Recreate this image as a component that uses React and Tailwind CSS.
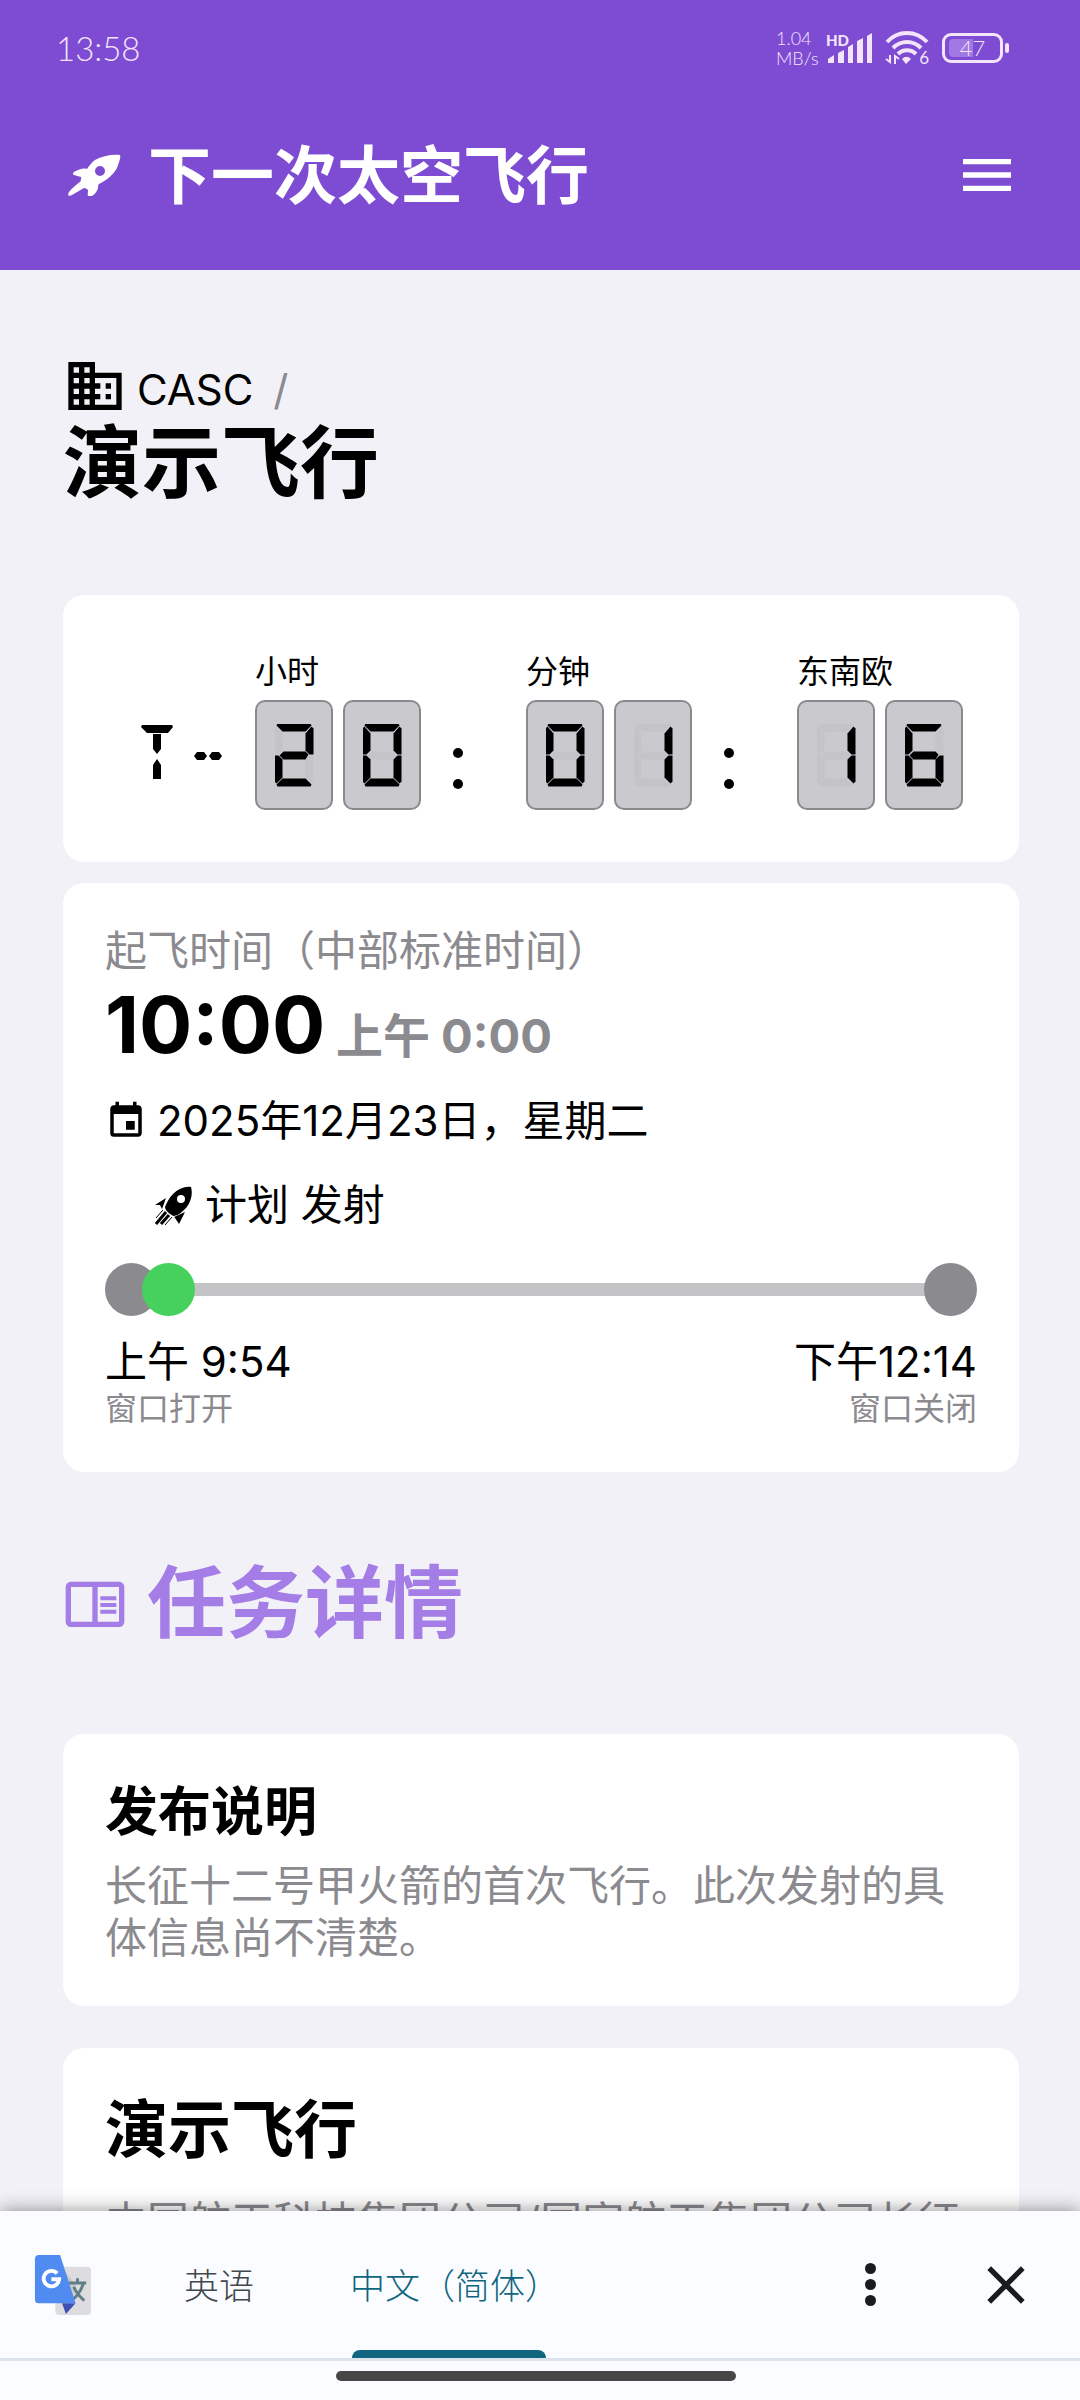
import { MdBusiness, MdEvent, MdOutlineChromeReaderMode, MdMenu, MdClose } from 'react-icons/md'

// Seven-segment shapes, clipped out of a 39x63 cell
const SEGMENTS = {
  a: '[clip-path:polygon(3px_0px,36px_0px,37px_2px,31px_8px,8px_8px,2px_2px)]',
  b: '[clip-path:polygon(37px_3px,39px_5px,39px_31px,35px_31px,31px_27px,31px_10px)]',
  c: '[clip-path:polygon(35px_32px,39px_32px,39px_58px,37px_60px,31px_54px,31px_36px)]',
  d: '[clip-path:polygon(8px_55px,31px_55px,37px_61px,36px_63px,3px_63px,2px_61px)]',
  e: '[clip-path:polygon(0px_32px,4px_32px,8px_36px,8px_54px,2px_60px,0px_58px)]',
  f: '[clip-path:polygon(2px_3px,8px_10px,8px_27px,4px_31px,0px_31px,0px_5px)]',
  g: '[clip-path:polygon(9px_28px,31px_28px,34px_31px,31px_36px,9px_36px,5px_32px)]',
}

const LIT = {
  0: 'abcdef',
  1: 'bc',
  2: 'abged',
  3: 'abgcd',
  4: 'fgbc',
  5: 'afgcd',
  6: 'afgecd',
  7: 'abc',
  8: 'abcdefg',
  9: 'abcdfg',
}

const UNITS = [
  { label: '小时', value: '20' },
  { label: '分钟', value: '01' },
  { label: '东南欧', value: '16' },
]

function Digit({ value }) {
  return (
    <div className="grid h-[110px] w-[78px] place-items-center rounded-[10px] border-2 border-[#8a898e] bg-[#cac9ce]">
      <div className="grid h-[63px] w-[39px]">
        {Object.entries(SEGMENTS).map(([name, shape]) => (
          <span
            key={name}
            className={`[grid-area:1/1] ${shape} ${LIT[value].includes(name) ? 'bg-black' : 'bg-[#c4c4c6]'}`}
          />
        ))}
      </div>
    </div>
  )
}

function Colon() {
  return (
    <div className="flex h-[110px] w-[105px] flex-col items-center gap-[21px] pt-12 pr-8">
      <span className="h-[10px] w-[10px] rounded-full bg-black" />
      <span className="h-[10px] w-[10px] rounded-full bg-black" />
    </div>
  )
}

function TMinus() {
  return (
    <div className="flex h-[110px] w-[136px] pt-[25px] pl-[22px]" role="img" aria-label="T-">
      <div className="grid h-[54px] w-8">
        <span className="[grid-area:1/1] bg-black [clip-path:polygon(1px_0px,31px_0px,32px_2px,27px_8px,6px_8px,0px_2px)]" />
        <span className="[grid-area:1/1] bg-black [clip-path:polygon(12px_9px,20px_9px,20px_24px,16px_29px,12px_24px)]" />
        <span className="[grid-area:1/1] bg-black [clip-path:polygon(16px_34px,20px_40px,20px_54px,12px_54px,12px_40px)]" />
      </div>
      <div className="flex gap-[2px] pt-[27px] pl-[21px]">
        <span className="h-2 w-[13px] bg-black [clip-path:polygon(3px_0px,10px_0px,13px_4px,10px_8px,3px_8px,0px_4px)]" />
        <span className="h-2 w-[13px] bg-black [clip-path:polygon(3px_0px,10px_0px,13px_4px,10px_8px,3px_8px,0px_4px)]" />
      </div>
    </div>
  )
}

function Countdown() {
  return (
    <section className="flex items-end justify-center rounded-[21px] bg-white pt-[57px] pb-[52px]">
      <TMinus />
      {UNITS.map((unit, i) => (
        <div key={unit.label} className="flex items-end">
          {i > 0 && <Colon />}
          <div>
            <p className="mb-2 text-[32px] leading-10 text-black">{unit.label}</p>
            <div className="flex gap-[10px]" role="img" aria-label={unit.value}>
              {unit.value.split('').map((d, j) => (
                <Digit key={j} value={d} />
              ))}
            </div>
          </div>
        </div>
      ))}
    </section>
  )
}

function HeaderRocket() {
  return (
    <svg viewBox="0 0 53 42" className="h-[42px] w-[53px]" aria-hidden="true">
      <path
        fill="#fff"
        fillRule="evenodd"
        d="M52 1C44 0 34 2 27 6c-3 2-6 6-8 9-4-1-7 0-11 2-3 1-4 3-2 4l7 2c1 1-1 3 0 4-4 3-9 7-12 11-2 3 0 5 3 3 4-2 8-5 12-7 2 0 3 1 4 2 0 3-1 7 1 7 5-1 8-5 9-9 0-2 0-3 1-4 8-4 14-9 18-16C51 8 53 4 52 1ZM32 12a5 5 0 1 0 0 10a5 5 0 0 0 0-10Z"
      />
    </svg>
  )
}

function LaunchRocket() {
  return (
    <svg viewBox="0 0 42 42" className="h-[42px] w-[42px]" aria-hidden="true">
      <path
        fillRule="evenodd"
        d="M38 3c-6-1-13 2-18 7-4 4-6 8-8 13 0 3 5 8 9 9 5-1 8-4 12-8 5-6 7-14 5-21ZM28 11a4 4 0 1 1 0 8a4 4 0 0 1 0-8Z"
      />
      <path d="M2 21l11-7-4 11-2-4ZM32 28l-6 12-4-6-1-1Z" />
      <path stroke="#000" strokeWidth="1" d="M10 26l-7 8M19 33l-7 8" />
      <path stroke="#000" strokeWidth="3" d="M13 28l-10 12M16 31l-8 9" />
    </svg>
  )
}

function TranslateLogo() {
  return (
    <svg viewBox="0 0 60 62" className="h-[60px] w-[58px]" aria-hidden="true">
      <rect x="22" y="12" width="37" height="50" rx="4" fill="#dddddf" />
      <path d="M28 12l16 20-6 22-8-2z" fill="#c8c8ca" />
      <path d="M36 29h18M45 24v5M51 29c-2 8-7 14-12 18M41 33c3 6 7 11 11 14" fill="none" stroke="#607d88" strokeWidth="3" />
      <path d="M29 50h14L33 61z" fill="#3e50b4" />
      <path d="M5 0h22l16 50H5a4 4 0 0 1-4-4V4a4 4 0 0 1 4-4Z" fill="#4f8bf0" />
      <path d="M24 19a8 8 0 1 0 2 6h-8" fill="none" stroke="#fff" strokeWidth="4" />
    </svg>
  )
}

function StatusBar() {
  return (
    <div className="flex h-24 items-center justify-between pr-[71px] pl-14 font-['Lato',sans-serif] text-[#f3e4fb]">
      <span className="text-[33px] leading-10 font-light">13:58</span>
      <div className="flex items-center">
        <div className="mr-[7px] w-[43px] text-[18px] leading-5 font-light">
          <p>1.04</p>
          <p>MB/s</p>
        </div>
        <div className="mr-3 grid h-8 w-[47px]">
          <span className="text-[15px] leading-4 font-black [grid-area:1/1]">HD</span>
          <svg viewBox="0 0 47 32" className="h-8 w-[47px] [grid-area:1/1]" fill="currentColor" aria-hidden="true">
            <path d="M2 27l6-4v8H2zM12 21l6-3v13h-6zM22 15l5-3v19h-5zM31 9l6-3v25h-6zM41 4l5-3v30h-5z" />
          </svg>
        </div>
        <div className="mr-[13px] grid h-9 w-11">
          <svg viewBox="0 0 44 34" className="h-[34px] w-11 [grid-area:1/1]" aria-hidden="true">
            <g fill="none" stroke="currentColor" strokeWidth="4">
              <path d="M2 12c11-12 29-12 40 0M8 18c8-8 20-8 28 0M13 24c5-5 13-5 18 0" />
            </g>
            <path d="M17 29c3-3 6-3 9 0l-5 5z" fill="currentColor" />
            <path d="M5 25v7l-4-3M10 34v-8l4 3" fill="none" stroke="currentColor" strokeWidth="2" />
          </svg>
          <span className="self-end justify-self-end text-[17px] leading-4 [grid-area:1/1]">6</span>
        </div>
        <div className="grid h-[30px] w-[61px] items-center rounded-[9px] border-[3px] border-current">
          <span className="ml-1 h-[18px] w-6 rounded-l-sm bg-[#a078e3] [grid-area:1/1]" />
          <span className="text-center text-[22px] leading-6 font-light [grid-area:1/1]">47</span>
        </div>
        <span className="ml-[2px] h-[10px] w-1 rounded-sm bg-current" />
      </div>
    </div>
  )
}

function Header() {
  return (
    <header className="h-[270px] shrink-0 bg-[#7e4bd3]">
      <StatusBar />
      <div className="flex h-[158px] items-center pr-[61px] pl-[68px]">
        <HeaderRocket />
        <h1 className="ml-[27px] flex-1 text-[63px] leading-[78px] font-bold text-white">下一次太空飞行</h1>
        <button type="button" aria-label="菜单" className="text-white">
          <MdMenu className="h-16 w-16" />
        </button>
      </div>
    </header>
  )
}

function LaunchTime() {
  return (
    <section className="mt-[21px] rounded-[21px] bg-white p-[42px] text-[42px] leading-[52px] text-black">
      <p className="text-[#8b8a8f]">起飞时间（中部标准时间）</p>
      <p className="text-[79px] leading-[94px] font-bold">
        10:00 <span className="-ml-2 text-[47px] font-bold text-[#8b8a8f]">上午 0:00</span>
      </p>
      <p className="mt-3 flex items-center gap-[10px]">
        <MdEvent className="h-[42px] w-[42px]" />
        2025年12月23日，星期二
      </p>
      <p className="mt-8 flex items-center gap-[10px] pl-12">
        <LaunchRocket />
        计划 发射
      </p>
      <div className="mt-8 grid items-center">
        <div className="mx-6 h-[13px] bg-[#c4c4c6] [grid-area:1/1]" />
        <div className="flex [grid-area:1/1]">
          <span className="h-[53px] w-[53px] rounded-full bg-[#8b8a8f]" />
          <span className="-ml-4 h-[53px] w-[53px] rounded-full bg-[#46d15c]" />
          <span className="ml-auto h-[53px] w-[53px] rounded-full bg-[#8b8a8f]" />
        </div>
      </div>
      <div className="mt-5 flex justify-between">
        <div>
          <p>上午 9:54</p>
          <p className="text-[32px] leading-[42px] text-[#8b8a8f]">窗口打开</p>
        </div>
        <div className="text-right">
          <p>下午12:14</p>
          <p className="text-[32px] leading-[42px] text-[#8b8a8f]">窗口关闭</p>
        </div>
      </div>
    </section>
  )
}

function TranslateBar() {
  return (
    <footer className="z-10 shrink-0 bg-[#fbfcff] shadow-[0_0_18px_rgba(0,0,0,0.45)]">
      <div className="flex h-[150px] items-stretch border-b-[3px] border-[#dde3ea] pr-[42px] pl-[34px]">
        <div className="flex items-center">
          <TranslateLogo />
        </div>
        <div className="ml-[92px] flex text-[35px] font-light" role="tablist">
          <button type="button" role="tab" aria-selected="false" className="pt-1 text-[#40484c]">
            英语
          </button>
          <button
            type="button"
            role="tab"
            aria-selected="true"
            className="ml-24 flex flex-col items-start text-[#10657f]"
          >
            <span className="flex flex-1 items-center pt-3">中文（简体）</span>
            <span className="ml-[2px] h-2 w-[194px] rounded-t-lg bg-[#10657f]" />
          </button>
        </div>
        <div className="ml-auto flex items-center gap-[86px]">
          <button type="button" aria-label="更多" className="flex w-9 flex-col items-center gap-[5px]">
            <span className="h-[11px] w-[11px] rounded-full bg-[#191c1e]" />
            <span className="h-[11px] w-[11px] rounded-full bg-[#191c1e]" />
            <span className="h-[11px] w-[11px] rounded-full bg-[#191c1e]" />
          </button>
          <button type="button" aria-label="关闭" className="text-[#191c1e]">
            <MdClose className="h-16 w-16" />
          </button>
        </div>
      </div>
      <div className="flex h-[39px] justify-center pt-[10px] pr-2">
        <span className="h-[10px] w-[400px] rounded-full bg-[#474747]" />
      </div>
    </footer>
  )
}

function App() {
  return (
    <div className="flex h-screen flex-col overflow-hidden bg-[#f2f1f7] font-['Inter','Noto_Sans_CJK_SC',sans-serif]">
      <Header />
      <main className="min-h-0 flex-1 overflow-hidden pt-[84px] pr-[61px] pl-[63px]">
        <div className="flex text-[42px] leading-[52px]">
          <MdBusiness className="h-16 w-16 text-black" />
          <p className="pt-[10px] pl-[10px] text-black">
            CASC <span className="ml-2 text-[#8b8a8f]">/</span>
          </p>
        </div>
        <h2 className="-mt-1 mb-[83px] text-[79px] leading-[98px] font-bold text-black">演示飞行</h2>

        <Countdown />
        <LaunchTime />

        <div className="my-[82px] flex items-center gap-5 text-[#a47ee6]">
          <MdOutlineChromeReaderMode className="h-16 w-16" />
          <h2 className="text-[79px] leading-[98px] font-bold">任务详情</h2>
        </div>

        <section className="rounded-[21px] bg-white p-[42px]">
          <h3 className="text-[53px] leading-[72px] font-bold text-black">发布说明</h3>
          <p className="mt-3 text-[42px] leading-[52px] text-[#8b8a8f]">
            长征十二号甲火箭的首次飞行。此次发射的具体信息尚不清楚。
          </p>
        </section>

        <section className="mt-[42px] rounded-[21px] bg-white p-[42px]">
          <h3 className="text-[63px] leading-[78px] font-bold text-black">演示飞行</h3>
          <p className="mt-7 text-[42px] leading-[52px] text-[#8b8a8f]">
            中国航天科技集团公司/国家航天集团公司长征
          </p>
        </section>
      </main>
      <TranslateBar />
    </div>
  )
}

export default App
